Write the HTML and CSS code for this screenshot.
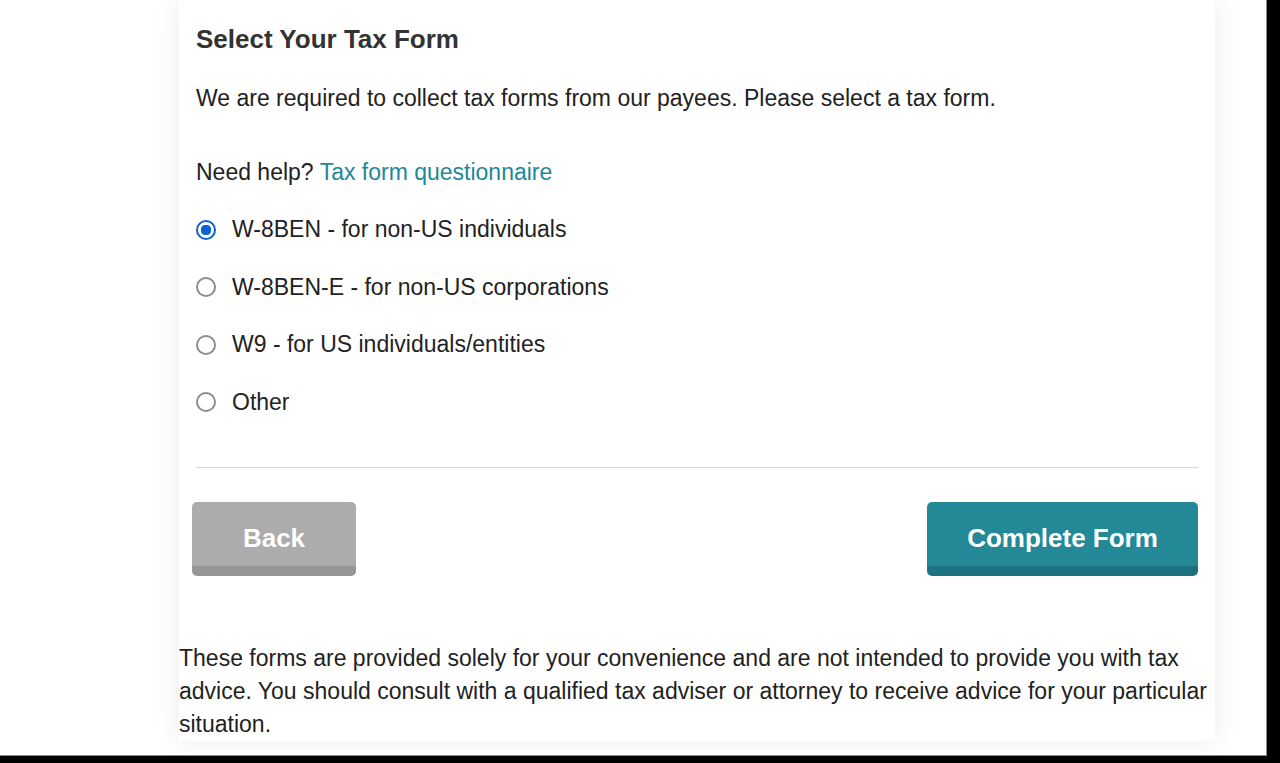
FILE: index.html
```html
<!DOCTYPE html>
<html lang="en">
<head>
<meta charset="utf-8">
<title>Select Your Tax Form</title>
<link rel="stylesheet" href="styles.css">
</head>
<body>
<div class="viewport">
  <div class="card">
    <div class="form">
      <h2 class="title">Select Your Tax Form</h2>
      <p class="lead">We are required to collect tax forms from our payees. Please select a tax form.</p>
      <p class="help">Need help? <a class="link" href="#">Tax form questionnaire</a></p>
      <div class="options">
        <label class="option"><span class="radio checked"></span><span class="label">W-8BEN - for non-US individuals</span></label>
        <label class="option"><span class="radio"></span><span class="label">W-8BEN-E - for non-US corporations</span></label>
        <label class="option"><span class="radio"></span><span class="label">W9 - for US individuals/entities</span></label>
        <label class="option"><span class="radio"></span><span class="label">Other</span></label>
      </div>
      <div class="divider"></div>
      <div class="actions">
        <button class="btn btn-back" type="button">Back</button>
        <button class="btn btn-primary" type="button">Complete Form</button>
      </div>
    </div>
    <p class="disclaimer">These forms are provided solely for your convenience and are not intended to provide you with tax advice. You should consult with a qualified tax adviser or attorney to receive advice for your particular situation.</p>
  </div>
</div>
</body>
</html>
```

FILE: styles.css
```css
html, body {
  margin: 0;
  padding: 0;
  background: #000;
  height: 100%;
  overflow: hidden;
}

.viewport {
  width: 1266px;
  height: 755px;
  background: #fff;
  border-right: 1px solid #8a8a8a;
  border-bottom: 1px solid #8a8a8a;
  overflow: hidden;
  font-family: "Liberation Sans", Arial, sans-serif;
  color: #222;
}

.card {
  margin-left: 179px;
  width: 1036px;
  background: #fff;
  box-shadow: 0 0 26px rgba(0, 0, 0, 0.08);
  padding-top: 23px;
}

.form {
  padding: 0 17px;
}

.title {
  margin: 0;
  font-size: 26px;
  line-height: 32px;
  font-weight: bold;
  color: #333;
}

.lead {
  margin: 30px 0 0;
  font-size: 23px;
  line-height: 27px;
}

.help {
  margin: 47px 0 0;
  font-size: 23px;
  line-height: 27px;
}

.link {
  color: #1d8898;
  text-decoration: none;
}

.options {
  margin-top: 30px;
  display: flex;
  flex-direction: column;
  gap: 30.5px;
}

.option {
  display: flex;
  align-items: center;
  gap: 16px;
  font-size: 23px;
  line-height: 27px;
  color: #222;
}

.radio {
  width: 20px;
  height: 20px;
  box-sizing: border-box;
  border: 2px solid #8c8c8c;
  border-radius: 50%;
  background: #fff;
  flex: none;
}

.radio.checked {
  border-color: #0b62d4;
  background: radial-gradient(circle, #0b62d4 0 5px, #fff 5.5px);
}

.divider {
  margin-top: 51.5px;
  height: 1px;
  background: #d6d6d6;
}

.actions {
  margin: 34px 0 0 -4px;
  display: flex;
  justify-content: space-between;
}

.btn {
  height: 74px;
  box-sizing: border-box;
  border: none;
  border-radius: 5px;
  padding: 9px 0 0;
  font-family: "Liberation Sans", Arial, sans-serif;
  font-size: 26px;
  font-weight: bold;
  color: #fff;
  cursor: pointer;
}

.btn-back {
  width: 164px;
  background: #acacac;
  border-bottom: 10px solid #969696;
}

.btn-primary {
  width: 271px;
  background: #238997;
  border-bottom: 10px solid #1b7380;
}

.disclaimer {
  margin: 65.5px 0 0;
  font-size: 23px;
  line-height: 33px;
  color: #222;
}
```
